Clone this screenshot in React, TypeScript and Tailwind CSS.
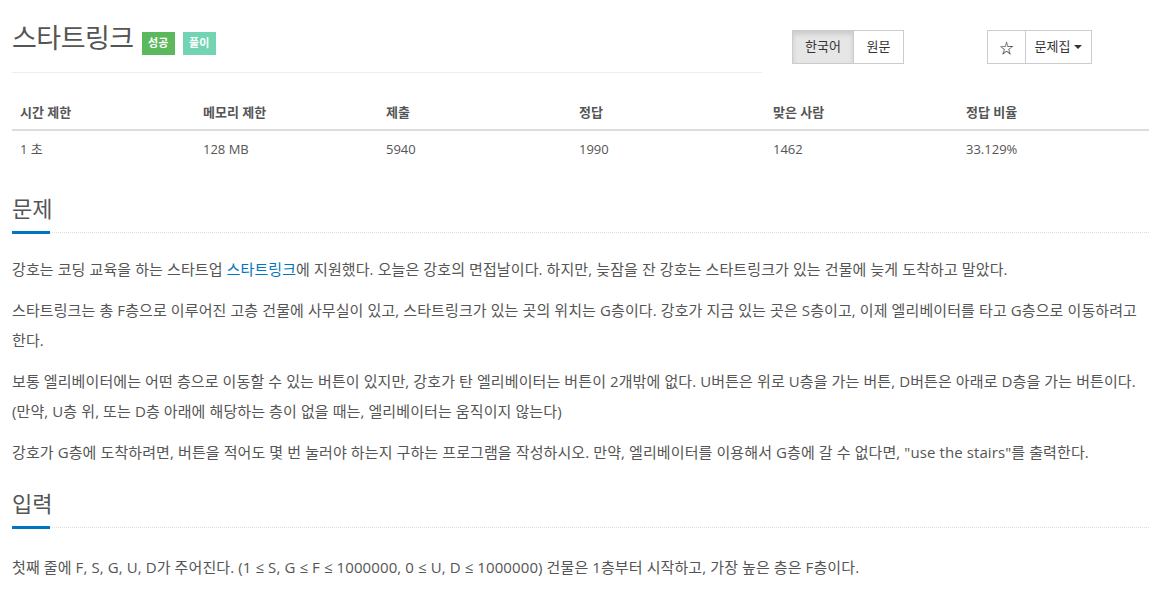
import React from "react";

const font = { fontFamily: '"Open Sans", "Noto Sans CJK KR", sans-serif' };

const stats = [
  { label: "시간 제한", value: "1 초", w: "w-[183px]" },
  { label: "메모리 제한", value: "128 MB", w: "w-[183px]" },
  { label: "제출", value: "5940", w: "w-[193px]" },
  { label: "정답", value: "1990", w: "w-[194px]" },
  { label: "맞은 사람", value: "1462", w: "w-[193px]" },
  { label: "정답 비율", value: "33.129%", w: "flex-1" },
];

function Heading({ children }: { children: React.ReactNode }) {
  return (
    <div className="relative border-b border-dotted border-[#dddddd] pb-[9px]">
      <h2 className="text-[22px] leading-[30px] text-[#555555]">{children}</h2>
      <span className="absolute bottom-[-2px] left-0 h-[3px] w-[38px] bg-[#0076c0]" />
    </div>
  );
}

export default function App() {
  return (
    <div className="min-h-screen bg-white px-[12px] text-[#555555]" style={font}>
      {/* Title row */}
      <div className="flex items-start pt-[18px]">
        <div className="w-[750px] border-b border-[#eeeeee] pb-[14px]">
          <div className="flex items-end gap-[8px]">
            <h1 className="text-[27px] leading-[40px] tracking-[-0.5px] text-[#555555]">스타트링크</h1>
            <span className="mb-[3px] flex h-[23px] w-[33px] items-center justify-center bg-[#5cb85c] text-[11px] font-bold text-white">성공</span>
            <span className="mb-[3px] flex h-[23px] w-[33px] items-center justify-center bg-[#72d4b3] text-[11px] font-bold text-white">풀이</span>
          </div>
        </div>
        <div className="ml-[30px] mt-[12px] flex h-[34px] text-[13px] text-[#333333]">
          <span className="flex w-[62px] items-center justify-center border border-[#cccccc] bg-[#e6e6e6] shadow-[inset_0_3px_5px_rgba(0,0,0,0.125)]">한국어</span>
          <span className="flex w-[50px] items-center justify-center border border-l-0 border-[#cccccc]">원문</span>
        </div>
        <div className="ml-[83px] mt-[12px] flex h-[34px] text-[13px] text-[#333333]">
          <span className="flex w-[39px] items-center justify-center border border-[#cccccc] text-[14px] font-bold">☆</span>
          <span className="flex w-[66px] items-center justify-center gap-[4px] border border-l-0 border-[#cccccc]">
            문제집
            <span className="h-0 w-0 border-x-[4px] border-t-[4px] border-x-transparent border-t-[#333333]" />
          </span>
        </div>
      </div>

      {/* Stats table */}
      <div className="mt-[20px] text-[13px]">
        <div className="flex border-b-2 border-[#dddddd] font-bold">
          {stats.map((s) => (
            <div key={s.label} className={`${s.w} px-[8px] pb-[7px] pt-[9px] leading-[20px]`}>{s.label}</div>
          ))}
        </div>
        <div className="flex">
          {stats.map((s) => (
            <div key={s.label} className={`${s.w} px-[8px] py-[8px] leading-[20px]`}>{s.value}</div>
          ))}
        </div>
      </div>

      {/* 문제 */}
      <section className="mt-[26px]">
        <Heading>문제</Heading>
        <div className="mt-[21px] space-y-[11px] break-keep text-[15px] leading-[30px] tracking-[0.1px]">
          <p>
            강호는 코딩 교육을 하는 스타트업 <span className="text-[#0076c0]">스타트링크</span>에 지원했다. 오늘은 강호의 면접날이다. 하지만, 늦잠을 잔 강호는 스타트링크가 있는 건물에 늦게 도착하고 말았다.
          </p>
          <p>
            스타트링크는 총 F층으로 이루어진 고층 건물에 사무실이 있고, 스타트링크가 있는 곳의 위치는 G층이다. 강호가 지금 있는 곳은 S층이고, 이제 엘리베이터를 타고 G층으로 이동하려고 한다.
          </p>
          <p>
            보통 엘리베이터에는 어떤 층으로 이동할 수 있는 버튼이 있지만, 강호가 탄 엘리베이터는 버튼이 2개밖에 없다. U버튼은 위로 U층을 가는 버튼, D버튼은 아래로 D층을 가는 버튼이다. (만약, U층 위, 또는 D층 아래에 해당하는 층이 없을 때는, 엘리베이터는 움직이지 않는다)
          </p>
          <p>
            강호가 G층에 도착하려면, 버튼을 적어도 몇 번 눌러야 하는지 구하는 프로그램을 작성하시오. 만약, 엘리베이터를 이용해서 G층에 갈 수 없다면, "use the stairs"를 출력한다.
          </p>
        </div>
      </section>

      {/* 입력 */}
      <section className="mt-[21px]">
        <Heading>입력</Heading>
        <div className="mt-[24px] break-keep text-[15px] leading-[30px] tracking-[0.1px]">
          <p>첫째 줄에 F, S, G, U, D가 주어진다. (1 ≤ S, G ≤ F ≤ 1000000, 0 ≤ U, D ≤ 1000000) 건물은 1층부터 시작하고, 가장 높은 층은 F층이다.</p>
        </div>
      </section>
    </div>
  );
}
